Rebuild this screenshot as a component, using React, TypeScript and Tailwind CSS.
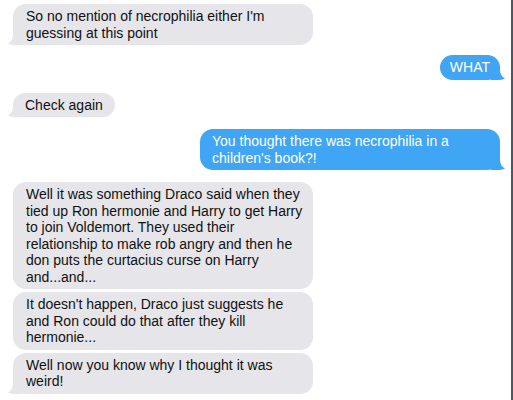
import type { ReactNode } from "react"

function Tail({ side, color }: { side: "left" | "right"; color: string }) {
  if (side === "left") {
    return (
      <svg
        className="absolute -left-[5px] bottom-0"
        width="14"
        height="14"
        viewBox="0 0 14 14"
      >
        <path d="M14 0 L14 14 L8 14 C5 14 2 13.5 0 12.5 C3 11 5 8 5 3 L5 0 Z" fill={color} />
      </svg>
    )
  }
  return (
    <svg
      className="absolute -right-[5px] bottom-0"
      width="14"
      height="14"
      viewBox="0 0 14 14"
    >
      <path d="M0 0 L0 14 L6 14 C9 14 12 13.5 14 12.5 C11 11 9 8 9 3 L9 0 Z" fill={color} />
    </svg>
  )
}

function Bubble({
  from,
  tail,
  className = "",
  children,
}: {
  from: "them" | "me"
  tail?: boolean
  className?: string
  children: ReactNode
}) {
  const me = from === "me"
  return (
    <div
      className={`relative rounded-[13px] py-[4px] text-[14px] leading-[16.5px] ${
        me ? "self-end bg-[#3fa5f4] text-white" : "self-start bg-[#e5e5ea] text-[#111]"
      } ${className}`}
    >
      {tail && <Tail side={me ? "right" : "left"} color={me ? "#3fa5f4" : "#e5e5ea"} />}
      <span className="relative">{children}</span>
    </div>
  )
}

export default function App() {
  return (
    <div
      className="h-[400px] w-[513px] bg-white border-r-2 border-[#4a5865] overflow-hidden"
      style={{ fontFamily: '"Liberation Sans", Arial, sans-serif' }}
    >
      <div className="flex flex-col pl-[13px] pr-[11px] pt-[4px]">
        <Bubble from="them" tail className="w-[300px] pl-[13px] pr-[8px]">
          So no mention of necrophilia either I'm guessing at this point
        </Bubble>

        <Bubble from="me" tail className="mt-[10px] px-[10px]">
          WHAT
        </Bubble>

        <Bubble from="them" tail className="mt-[13px] px-[12px]">
          Check again
        </Bubble>

        <Bubble from="me" tail className="mt-[12px] w-[300px] pl-[12px] pr-[8px]">
          You thought there was necrophilia in a children's book?!
        </Bubble>

        <Bubble from="them" className="mt-[12px] w-[300px] pl-[13px] pr-[8px]">
          Well it was something Draco said when they tied up Ron hermonie and Harry to get Harry
          to join Voldemort. They used their relationship to make rob angry and then he don puts
          the curtacius curse on Harry and...and...
        </Bubble>

        <Bubble from="them" className="mt-[3px] w-[300px] pl-[13px] pr-[8px]">
          It doesn't happen, Draco just suggests he and Ron could do that after they kill
          hermonie...
        </Bubble>

        <Bubble from="them" tail className="mt-[3px] w-[300px] pl-[13px] pr-[8px]">
          Well now you know why I thought it was weird!
        </Bubble>
      </div>
    </div>
  )
}
